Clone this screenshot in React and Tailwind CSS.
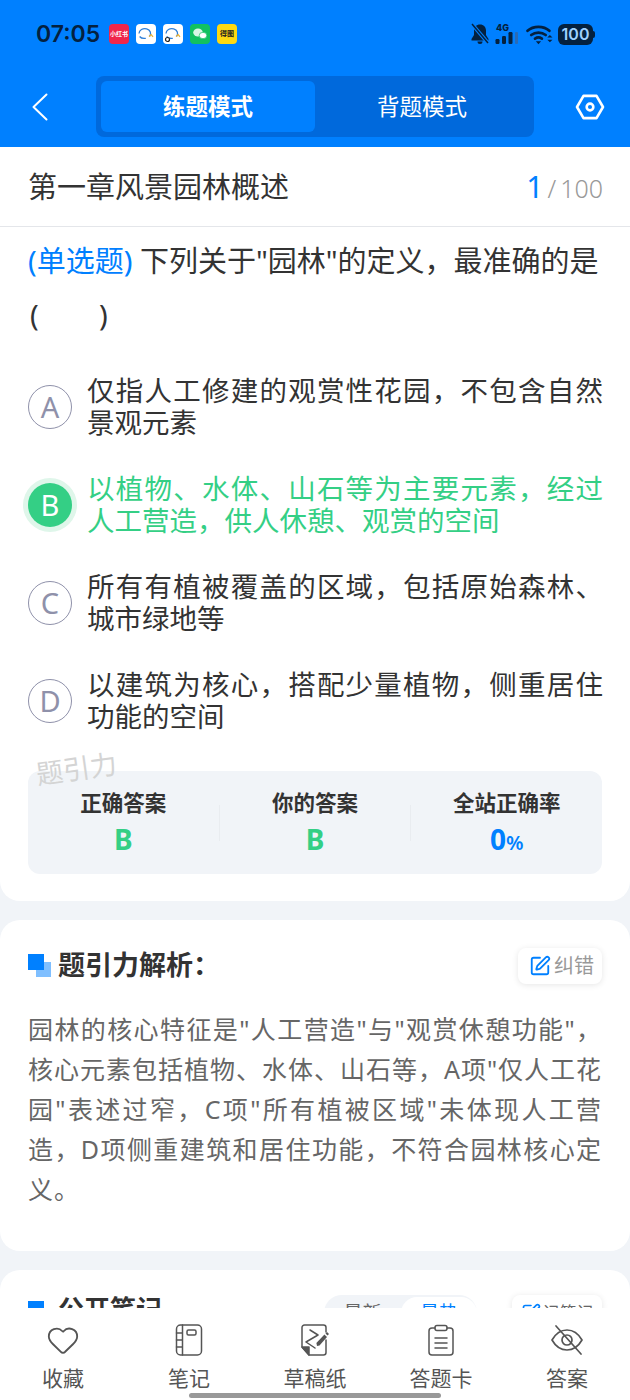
import { Heart, SquarePen } from 'lucide-react'

const FONT = { fontFamily: '"Noto Sans", "Noto Sans CJK SC", sans-serif' }

const OPTIONS = [
  { key: 'A', text: '仅指人工修建的观赏性花园，不包含自然景观元素' },
  { key: 'B', text: '以植物、水体、山石等为主要元素，经过人工营造，供人休憩、观赏的空间', correct: true },
  { key: 'C', text: '所有有植被覆盖的区域，包括原始森林、城市绿地等' },
  { key: 'D', text: '以建筑为核心，搭配少量植物，侧重居住功能的空间' },
]

function Bubble({ badge }) {
  return (
    <svg viewBox="0 0 20 20" className="w-5 h-5">
      <rect width="20" height="20" rx="4" fill="#fff" />
      <path d="M3 9.5a5.8 5 0 1 1 10.5 3M3.6 12.5c1.6 2 3.6 2.2 6.2 1.8" fill="none" stroke="#2f7fd8" strokeWidth="1.3" />
      <path d="M13 12.5l2.2-1.8 1.8 2.2" fill="none" stroke="#e8b23a" strokeWidth="1.3" />
      {badge && <circle cx="4.5" cy="15.5" r="2" fill="#fff" stroke="#222" strokeWidth="1.2" />}
    </svg>
  )
}

function StatusBar() {
  return (
    <div className="h-[68px] flex items-center pl-[36px] pr-[35px] text-[#04213f]">
      <span className="text-[23px] font-semibold w-[72px]" style={{ fontFamily: 'Inter, sans-serif' }}>07:05</span>
      <div className="flex items-center gap-[7px] ml-[1px]">
        <div className="w-5 h-5 rounded-[4px] bg-[#f0264a] flex items-center justify-center text-[6px] text-white font-bold whitespace-nowrap">小红书</div>
        <Bubble />
        <Bubble badge />
        <svg viewBox="0 0 20 20" className="w-5 h-5">
          <rect width="20" height="20" rx="4" fill="#12c160" />
          <ellipse cx="8" cy="8.5" rx="4.8" ry="4" fill="#d8f7e5" />
          <ellipse cx="13" cy="11.5" rx="3.8" ry="3.2" fill="#fff" stroke="#12c160" strokeWidth="0.7" />
        </svg>
        <div className="w-5 h-5 rounded-[4px] bg-[#fdd912] flex items-center justify-center text-[7px] text-[#222] font-bold whitespace-nowrap">得图</div>
      </div>
      <div className="ml-auto flex items-center">
        <svg viewBox="0 0 20 22" className="w-[20px] h-[22px]" fill="#04213f">
          <path d="M10 1.5c-3.6 0-6 2.6-6 6v4.4L1.5 16v1.5h17V16L16 11.9V7.5c0-3.4-2.4-6-6-6zM7.5 18.5a2.5 2.5 0 0 0 5 0z" />
          <path d="M2 1l16 19" stroke="#0080ff" strokeWidth="3.6" />
          <path d="M2 1l16 19" stroke="#04213f" strokeWidth="1.5" />
        </svg>
        <svg viewBox="0 0 26 24" className="w-[26px] h-[24px] ml-[5px]" fill="#04213f">
          <text x="1" y="8.5" fontSize="9" fontWeight="800" fontFamily="Inter, sans-serif">4G</text>
          <rect x="0.5" y="17" width="4" height="5" rx="1.2" />
          <rect x="7" y="14" width="4" height="8" rx="1.2" />
          <rect x="13.5" y="10" width="4" height="12" rx="1.2" />
          <rect x="20" y="10" width="3" height="12" rx="1" fill="#2a6bb5" />
        </svg>
        <svg viewBox="0 0 26 20" className="w-[27px] h-[21px] ml-[5px]" fill="none" stroke="#04213f" strokeWidth="2.6" strokeLinecap="round">
          <path d="M1.5 6.5C7 1.5 17 1.5 22.5 6.5" />
          <path d="M5 10.5c4-3.2 10-3.2 14 0" />
          <path d="M8.7 14c2-1.4 4.6-1.4 6.6 0" />
          <path d="M9.5 16.5h5L12 19.5z" fill="#04213f" stroke="none" />
          <path d="M20.5 13l2.5-2.5 2.5 2.5zM20.5 15h5L23 17.5z" fill="#04213f" stroke="none" />
        </svg>
        <div className="ml-[5px] flex items-center">
          <div className="w-[35px] h-[21px] rounded-[6px] bg-[#04213f] text-[#9fd0ff] text-[16px] font-semibold leading-[21px] text-center" style={{ fontFamily: 'Inter, sans-serif' }}>100</div>
          <div className="w-[2px] h-[7px] rounded-r-sm bg-[#04213f]" />
        </div>
      </div>
    </div>
  )
}

function Header() {
  return (
    <div className="bg-[#0080ff] h-[147px] shrink-0">
      <StatusBar />
      <div className="flex items-center h-[61px] mt-[8px] pl-[32px] pr-[25px]">
        <svg viewBox="0 0 16 28" className="w-[16px] h-[28px]" fill="none" stroke="#fff" strokeWidth="2" strokeLinecap="round" strokeLinejoin="round">
          <path d="M14.5 1.5L1.5 14l13 12.5" />
        </svg>
        <div className="ml-[48px] w-[438px] h-[61px] bg-[#0069dc] rounded-lg p-[5px] flex">
          <div className="w-[214px] bg-[#0080ff] rounded-md flex items-center justify-center text-white text-[22.5px] font-bold">练题模式</div>
          <div className="flex-1 flex items-center justify-center text-white text-[22.5px]">背题模式</div>
        </div>
        <svg viewBox="0 0 32 28" className="w-[30px] h-[26px] ml-auto" fill="none" stroke="#fff">
          <path d="M9 2h14l7 12-7 12H9L2 14z" strokeWidth="2.8" strokeLinejoin="round" />
          <circle cx="16" cy="14" r="3.6" strokeWidth="2.8" />
        </svg>
      </div>
    </div>
  )
}

function Stat({ label, children }) {
  return (
    <div className="flex-1 text-center">
      <div className="text-[21.5px] font-bold text-[#333] leading-[30px]">{label}</div>
      <div className="h-[36px] text-[28px] font-bold leading-[36px] mt-[3px]">{children}</div>
    </div>
  )
}

function Question() {
  return (
    <div className="relative bg-white rounded-b-[20px] h-[754px]">
      <div className="h-[80px] border-b border-[#e4e6ea] flex items-center justify-between pl-[28px] pr-[27px]">
        <span className="text-[29px] text-[#333]">第一章风景园林概述</span>
        <span className="text-[25px] text-[#999] font-light"><span className="text-[30px] font-normal text-[#0080ff]">1</span><span className="mx-[4px]">/</span>100</span>
      </div>
      <div className="px-[28px] pt-[7px] text-[29px] leading-[54px] text-[#333] whitespace-nowrap h-[118px]">
        <div className="h-[54px]"><span className="text-[#0080ff]">(单选题)</span> 下列关于"园林"的定义，最准确的是</div>
        <div className="h-[54px] pl-[2px]">(&nbsp;&nbsp;&nbsp;&nbsp;&nbsp;&nbsp;&nbsp;&nbsp;)</div>
      </div>
      <div className="mt-[29px] pl-[28px] pr-[27px] flex flex-col gap-[33px]">
        {OPTIONS.map(o => (
          <div key={o.key} className="flex items-center h-[65px]">
            {o.correct ? (
              <div className="w-[44px] h-[44px] rounded-full bg-[#34cf85] ring-[5px] ring-[#dff6ea] text-white text-[29px] flex items-center justify-center shrink-0">{o.key}</div>
            ) : (
              <div className="w-[44px] h-[44px] rounded-full border border-[#8f91aa] text-[#8f91aa] text-[29px] flex items-center justify-center shrink-0">{o.key}</div>
            )}
            <p className={`ml-[15px] flex-1 text-[27.5px] leading-[32px] text-justify ${o.correct ? 'text-[#34cf85]' : 'text-[#333]'}`}>{o.text}</p>
          </div>
        ))}
      </div>
      <div className="mx-[28px] mt-[38px] h-[103px] rounded-xl bg-[#f1f4f8] flex items-center">
        <Stat label="正确答案"><span className="text-[#34cf85]">B</span></Stat>
        <div className="w-px h-[36px] bg-[#e9ecf0]" />
        <Stat label="你的答案"><span className="text-[#34cf85]">B</span></Stat>
        <div className="w-px h-[36px] bg-[#e9ecf0]" />
        <Stat label="全站正确率"><span className="text-[#0080ff]">0<span className="text-[20px] font-semibold">%</span></span></Stat>
      </div>
      <div className="absolute left-[36px] top-[602px] text-[#d4d4d4] text-[27px] -rotate-[8deg]">题引力</div>
    </div>
  )
}

function Analysis() {
  return (
    <div className="mt-[19px] bg-white rounded-[20px] h-[331px] px-[28px] pt-[27px]">
      <div className="flex items-center justify-between h-[37px]">
        <div className="flex items-center">
          <div className="relative w-[23px] h-[23px]">
            <div className="absolute right-0 bottom-0 w-[15px] h-[15px] bg-[#7fbfff]" />
            <div className="absolute left-0 top-0 w-[16px] h-[16px] bg-[#0080ff]" />
          </div>
          <span className="ml-[7px] text-[27px] font-bold text-[#333]">题引力解析：</span>
        </div>
        <div className="w-[84px] h-[36px] pl-[3px] rounded-lg bg-white shadow-[0_1px_6px_rgba(0,0,0,0.1)] flex items-center justify-center text-[20px] text-[#999]">
          <SquarePen className="w-[22px] h-[22px] text-[#0080ff] mr-[3px]" strokeWidth={2} />
          纠错
        </div>
      </div>
      <p className="mt-[25px] text-[25px] tracking-[0.9px] leading-[40px] text-[#666] text-justify">
        园林的核心特征是"人工营造"与"观赏休憩功能"，核心元素包括植物、水体、山石等，A项"仅人工花园"表述过窄，C项"所有植被区域"未体现人工营造，D项侧重建筑和居住功能，不符合园林核心定义。
      </p>
    </div>
  )
}

function Notes() {
  return (
    <div className="mt-[19px] bg-white rounded-t-[20px] h-[100px] px-[28px] pt-[27px] flex justify-between">
      <div className="flex items-center h-[24px]">
        <div className="w-[16px] h-[16px] bg-[#0080ff]" />
        <span className="ml-[14px] text-[26px] font-bold text-[#333]">公开笔记</span>
      </div>
      <div className="flex -mt-[2px]">
        <div className="w-[153px] h-[36px] rounded-full bg-[#f1f4f8] flex items-center text-[19px] text-[#666]">
          <span className="flex-1 text-center">最新</span>
          <span className="w-[76px] h-[32px] rounded-full bg-white text-[#0080ff] flex items-center justify-center">最热</span>
        </div>
        <div className="ml-[35px] w-[90px] h-[36px] rounded-lg bg-white shadow-[0_1px_6px_rgba(0,0,0,0.1)] flex items-center justify-center text-[17px] text-[#666] whitespace-nowrap">
          <SquarePen className="w-[20px] h-[20px] text-[#0080ff] mr-[2px]" />
          记笔记
        </div>
      </div>
    </div>
  )
}

const STROKE = { fill: 'none', stroke: '#555', strokeWidth: 1.5, strokeLinecap: 'round', strokeLinejoin: 'round' }

function NotebookIcon() {
  return (
    <svg viewBox="0 0 32 34" className="w-[32px] h-[34px]" {...STROKE}>
      <rect x="3.5" y="2" width="25" height="30" rx="4" />
      <path d="M9.5 2v30M3.5 10h6M3.5 17h6M3.5 24h6" />
      <rect x="14" y="7" width="9" height="5" rx="1.5" />
    </svg>
  )
}

function DraftIcon() {
  return (
    <svg viewBox="0 0 32 34" className="w-[32px] h-[34px]" {...STROKE}>
      <path d="M27 17v12.5a2.5 2.5 0 0 1-2.5 2.5H10l-7-8V4.5A2.5 2.5 0 0 1 5.500 2h19a2.500 2.500 0 0 1 2.500 2.500V9" />
      <path d="M3 24h7v8z" fill="#555" />
      <path d="M11 7l8 5-12 7 9 6" />
      <path d="M18 23l-.6-3 8-8.500 2.600 2.500-7.500 8.500z" fill="#555" stroke="none" />
      <path d="M26.500 10.500l1.500-1.500 2 2-1.500 1.500z" fill="#555" stroke="none" />
    </svg>
  )
}

function SheetIcon() {
  return (
    <svg viewBox="0 0 32 34" className="w-[32px] h-[34px]" {...STROKE}>
      <path d="M10 5H7a3 3 0 0 0-3 3v21a3 3 0 0 0 3 3h18a3 3 0 0 0 3-3V8a3 3 0 0 0-3-3h-3" />
      <rect x="10" y="2.500" width="12" height="5" rx="2" />
      <path d="M10 15h12M10 20h12M10 25h12" />
    </svg>
  )
}

function EyeOffIcon() {
  return (
    <svg viewBox="0 0 34 34" className="w-[34px] h-[34px]" {...STROKE} strokeWidth={1.7}>
      <path d="M2 17c4-7 9-10 15-10s11 3 15 10c-4 7-9 10-15 10S6 24 2 17z" />
      <circle cx="17" cy="17" r="5" />
      <path d="M6 3l25 28" />
    </svg>
  )
}

const TABS = [
  { label: '收藏', icon: <Heart className="w-[34px] h-[34px] text-[#555]" strokeWidth={1.3} /> },
  { label: '笔记', icon: <NotebookIcon /> },
  { label: '草稿纸', icon: <DraftIcon /> },
  { label: '答题卡', icon: <SheetIcon /> },
  { label: '答案', icon: <EyeOffIcon /> },
]

function BottomBar() {
  return (
    <div className="relative bg-white h-[92px] shrink-0 flex justify-between pt-[14px]">
      {TABS.map(tab => (
        <div key={tab.label} className="w-[126px] flex flex-col items-center">
          <div className="h-[36px] flex items-center">{tab.icon}</div>
          <span className="mt-[5px] text-[21px] leading-[30px] text-[#555]">{tab.label}</span>
        </div>
      ))}
      <div className="absolute left-[189px] bottom-[2px] w-[252px] h-[5px] rounded-full bg-[#999]" />
    </div>
  )
}

export default function App() {
  return (
    <div className="w-[630px] h-[1400px] flex flex-col overflow-hidden bg-[#f1f4f8]" style={FONT}>
      <Header />
      <div className="flex-1 overflow-hidden">
        <Question />
        <Analysis />
        <Notes />
      </div>
      <BottomBar />
    </div>
  )
}
